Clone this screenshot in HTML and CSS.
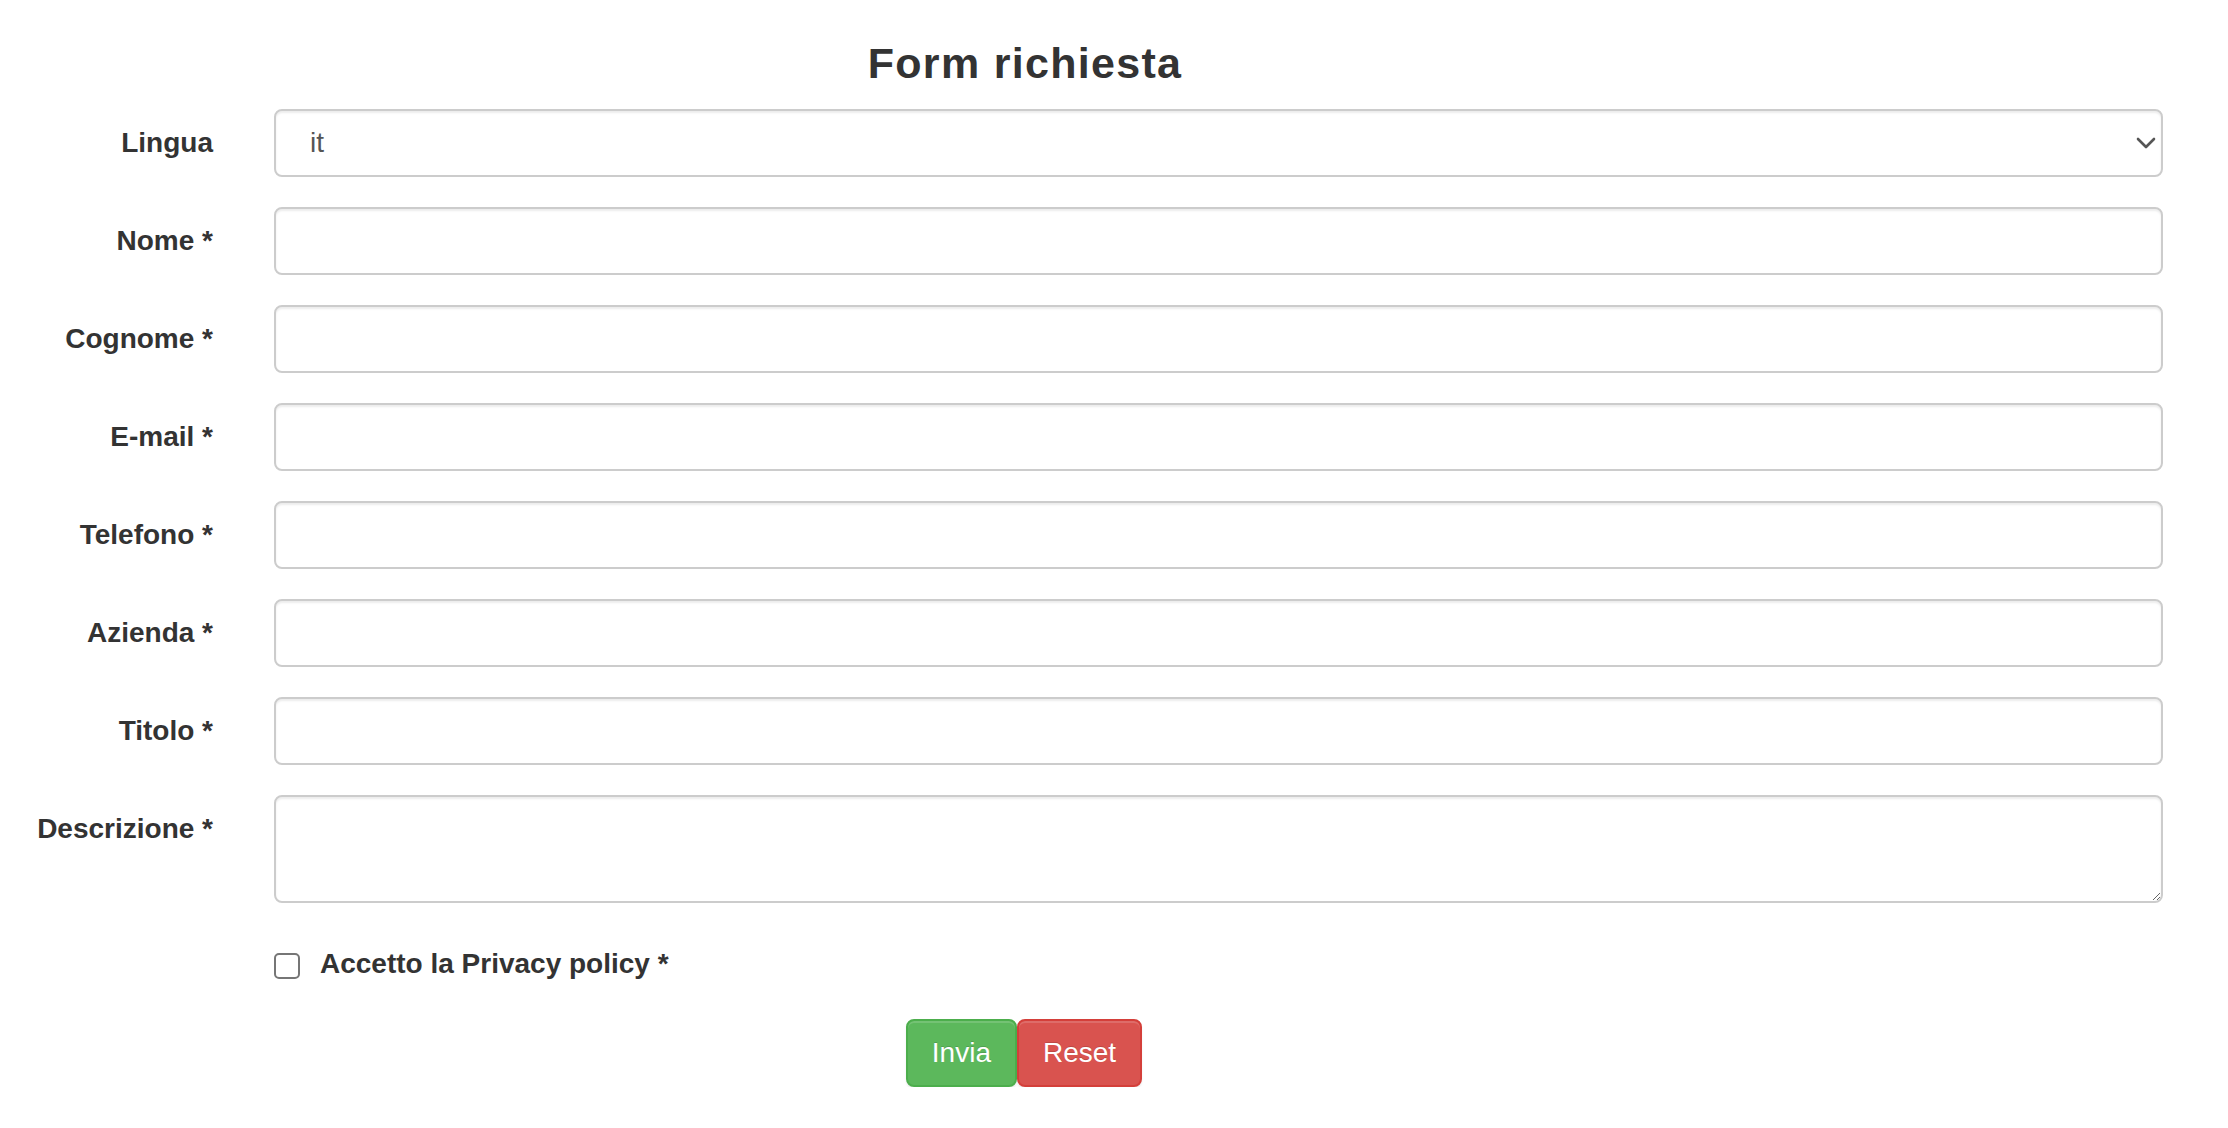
FILE: index.html
```html
<!DOCTYPE html>
<html lang="it">

<head>
    <meta charset="UTF-8">
    <meta name="viewport" content="width=device-width, initial-scale=1.0">
    <title>Form richiesta</title>
    <link rel="stylesheet" href="styles.css">
</head>

<body>

    <div class="page">
        <h3 class="title">Form richiesta</h3>

        <form class="request-form">
            <label class="field-label" for="lingua">Lingua</label>
            <div class="select-wrap">
                <select id="lingua" class="field">
                    <option>it</option>
                    <option>en</option>
                </select>
                <svg class="chevron" width="20" height="12" viewBox="0 0 20 12">
                    <path d="M2 2 L10 10 L18 2" fill="none" stroke="#555" stroke-width="2.6" stroke-linecap="round" stroke-linejoin="round"/>
                </svg>
            </div>

            <label class="field-label" for="nome">Nome *</label>
            <input id="nome" class="field" type="text">

            <label class="field-label" for="cognome">Cognome *</label>
            <input id="cognome" class="field" type="text">

            <label class="field-label" for="email">E-mail *</label>
            <input id="email" class="field" type="email">

            <label class="field-label" for="telefono">Telefono *</label>
            <input id="telefono" class="field" type="text">

            <label class="field-label" for="azienda">Azienda *</label>
            <input id="azienda" class="field" type="text">

            <label class="field-label" for="titolo">Titolo *</label>
            <input id="titolo" class="field" type="text">

            <label class="field-label" for="descrizione">Descrizione *</label>
            <textarea id="descrizione" class="field area" rows="2"></textarea>

            <div></div>
            <label class="privacy">
                <input type="checkbox" class="check">
                <span>Accetto la Privacy policy *</span>
            </label>
        </form>

        <div class="actions">
            <button type="submit" class="btn btn-send">Invia</button>
            <button type="reset" class="btn btn-reset">Reset</button>
        </div>
    </div>

</body>

</html>
```

FILE: styles.css
```css
* {
    margin: 0;
    padding: 0;
    box-sizing: border-box;
    font-family: "Liberation Sans", Arial, sans-serif;
}

body {
    background: #fff;
    color: #333;
}

.page {
    width: 2228px;
    padding-top: 40px;
}

.title {
    width: 2050px;
    text-align: center;
    font-size: 43px;
    line-height: 1.1;
    font-weight: bold;
    letter-spacing: 1.3px;
    color: #333;
    margin-bottom: 22px;
}

.request-form {
    display: grid;
    grid-template-columns: 213px 1889px;
    column-gap: 61px;
    row-gap: 30px;
}

.field-label {
    text-align: right;
    font-size: 28px;
    font-weight: bold;
    line-height: 40px;
    padding-top: 14px;
    color: #333;
}

.field {
    display: block;
    width: 100%;
    height: 68px;
    padding: 12px 24px;
    font-size: 28px;
    line-height: 40px;
    color: #555;
    background: #fff;
    border: 2px solid #ccc;
    border-radius: 8px;
    box-shadow: inset 0 2px 2px rgba(0, 0, 0, 0.075);
    outline: none;
}

.select-wrap {
    position: relative;
}

.select-wrap select {
    appearance: none;
    -webkit-appearance: none;
    padding-left: 34px;
}

.chevron {
    position: absolute;
    right: 7px;
    top: 28px;
    pointer-events: none;
}

.area {
    height: 108px;
    resize: vertical;
}

.privacy {
    display: flex;
    align-items: center;
    margin-top: 11px;
    font-size: 28px;
    font-weight: bold;
    line-height: 40px;
    color: #333;
}

.check {
    appearance: none;
    -webkit-appearance: none;
    width: 26px;
    height: 26px;
    border: 2px solid #767676;
    border-radius: 5px;
    background: #fff;
    margin-right: 20px;
    margin-top: 4px;
}

.actions {
    width: 2048px;
    display: flex;
    justify-content: center;
    margin-top: 35px;
}

.btn {
    height: 68px;
    padding: 12px 24px;
    font-size: 28px;
    line-height: 40px;
    color: #fff;
    border-radius: 8px;
    border: 2px solid;
    cursor: pointer;
    text-shadow: 0 -1px 0 rgba(0, 0, 0, 0.15);
    box-shadow: inset 0 2px 0 rgba(255, 255, 255, 0.15), 0 2px 2px rgba(0, 0, 0, 0.075);
}

.btn-send {
    background-color: #5cb85c;
    border-color: #4cae4c;
}

.btn-reset {
    background-color: #d9534f;
    border-color: #d43f3a;
}
```
